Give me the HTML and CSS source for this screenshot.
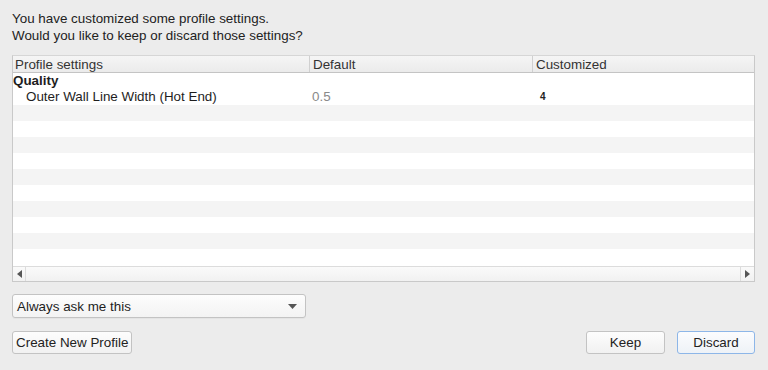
FILE: index.html
```html
<!DOCTYPE html>
<html lang="en">
<head>
  <meta charset="UTF-8" />
  <title>Discard or Keep changes</title>
  <link rel="stylesheet" href="styles.css">
</head>
<body>
  <div class="dialog">
    <p class="message">You have customized some profile settings.<br>Would you like to keep or discard those settings?</p>

    <!-- settings table -->
    <div class="table">
      <div class="row head"><div class="cell">Profile settings</div><div class="cell">Default</div><div class="cell">Customized</div></div>
      <div class="rows">
        <div class="row"><div class="cell cat">Quality</div><div class="cell"></div><div class="cell"></div></div>
        <div class="row"><div class="cell setting">Outer Wall Line Width (Hot End)</div><div class="cell def">0.5</div><div class="cell cust">4</div></div>
        <div class="row alt"></div><div class="row"></div>
        <div class="row alt"></div><div class="row"></div>
        <div class="row alt"></div><div class="row"></div>
        <div class="row alt"></div><div class="row"></div>
        <div class="row alt"></div><div class="row"></div>
      </div>
      <div class="hscroll">
        <div class="arrow left"><svg width="5" height="8" viewBox="0 0 5 8"><path d="M5 0L0 4L5 8Z" fill="#555"/></svg></div>
        <div class="track"></div>
        <div class="arrow right"><svg width="5" height="8" viewBox="0 0 5 8"><path d="M0 0L5 4L0 8Z" fill="#555"/></svg></div>
      </div>
    </div>

    <div class="combo">
      <span>Always ask me this</span>
      <svg width="9" height="5" viewBox="0 0 9 5"><path d="M0 0H9L4.5 5Z" fill="#555"/></svg>
    </div>

    <div class="buttons">
      <button class="btn">Create New Profile</button>
      <div class="spacer"></div>
      <button class="btn keep">Keep</button>
      <button class="btn discard">Discard</button>
    </div>
  </div>
</body>
</html>
```

FILE: styles.css
```css
:root{--bg:#ececec;--border:#c9c9c9;--stripe:#f4f4f4;--text:#1e1e1e}
*{box-sizing:border-box;margin:0;padding:0}
body{font-family:"Liberation Sans",Arial,sans-serif;font-size:13.4px;background:var(--bg);color:var(--text);width:768px;height:370px;overflow:hidden}
.dialog{padding:10px 13px 0 12px;display:flex;flex-direction:column}
.message{line-height:17px;color:#222}
/* table */
.table{margin-top:11px;border:1px solid var(--border);border-top-color:#d6d6d6;background:#fff;display:flex;flex-direction:column}
.row{display:grid;grid-template-columns:296px 223px 1fr;height:16px;line-height:16px}
.rows{height:193px;overflow:hidden}
.row.alt{background:var(--stripe)}
.head{height:17px;background:linear-gradient(#f5f5f5,#ebebeb);border-bottom:1px solid #c4c4c4;color:#333;line-height:18px}
.head .cell{padding-left:2px}
.head .cell + .cell{border-left:1px solid #d0d0d0}
.head .cell:nth-child(2){padding-left:3px}
.head .cell:nth-child(3){padding-left:3px}
.cell{white-space:nowrap;overflow:hidden}
.cat{font-weight:bold;padding-left:0}
.setting{padding-left:13px}
.def{color:#8a8a8a;padding-left:3px}
.cust{font-size:10px;font-weight:bold;padding-left:8px;color:#222}
.hscroll{height:15px;display:flex;border-top:1px solid #dcdcdc;background:linear-gradient(#fafafa,#f1f1f1)}
.arrow{width:13px;display:flex;align-items:center;justify-content:center}
.arrow.left{border-right:1px solid #dcdcdc}
.arrow.right{width:14px;border-left:1px solid #dcdcdc}
.track{flex:1}
/* combo */
.combo{margin-top:12px;width:294px;height:24px;border:1px solid #c3c3c3;border-radius:3px;background:linear-gradient(#fdfdfd,#f3f3f3);display:flex;align-items:center;justify-content:space-between;padding:0 8px 0 4px;box-shadow:0 1px 0 rgba(0,0,0,.03)}
/* buttons */
.buttons{margin-top:13px;display:flex;gap:12px}
.spacer{flex:1}
.btn{font-family:inherit;font-size:13.4px;color:#222;height:23px;border:1px solid #c3c3c3;border-radius:3px;background:linear-gradient(#fdfdfd,#f1f1f1);padding:0 3px}
.keep{width:79px}
.discard{width:78px;border-color:#8db6e8;background:linear-gradient(#fbfcfe,#eef2f7)}
```
